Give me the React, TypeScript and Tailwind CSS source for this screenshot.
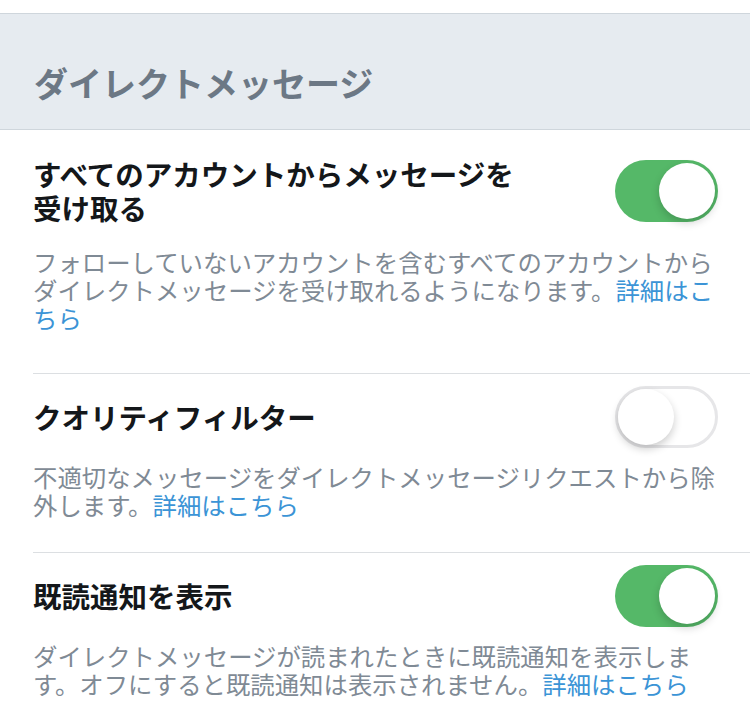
import { useState } from "react";

interface Setting {
    id: string;
    title: string;
    description: string;
    on: boolean;
}

const settings: Setting[] = [
    {
        id: "all",
        title: "すべてのアカウントからメッセージを受け取る",
        description: "フォローしていないアカウントを含むすべてのアカウントからダイレクトメッセージを受け取れるようになります。",
        on: true,
    },
    {
        id: "quality",
        title: "クオリティフィルター",
        description: "不適切なメッセージをダイレクトメッセージリクエストから除外します。",
        on: false,
    },
    {
        id: "receipts",
        title: "既読通知を表示",
        description: "ダイレクトメッセージが読まれたときに既読通知を表示します。オフにすると既読通知は表示されません。",
        on: true,
    },
];

function Toggle({ on, onClick }: { on: boolean; onClick: () => void }) {
    if (!on) {
        return (
            <button
                onClick={onClick}
                className="shrink-0 w-[103px] h-[62px] rounded-full border-[3px] border-[#e6e6e8] bg-white flex items-center"
            >
                <span className="w-[56px] h-[56px] rounded-full bg-white shadow-[0_4px_8px_rgba(0,0,0,0.2)]" />
            </button>
        );
    }
    return (
        <button
            onClick={onClick}
            className="shrink-0 w-[103px] h-[62px] rounded-full p-[3px] flex items-center justify-end bg-[#55b868]"
        >
            <span className="w-[56px] h-[56px] rounded-full bg-white shadow-[0_4px_8px_rgba(0,0,0,0.18)]" />
        </button>
    );
}

export default function App() {
    const [state, setState] = useState(settings.map((s) => s.on));

    const flip = (i: number) => {
        setState((prev) => prev.map((v, j) => (j === i ? !v : v)));
    };

    return (
        <div className="w-[750px] h-[717px] overflow-hidden bg-white font-['Noto_Sans_CJK_JP',sans-serif]">
            {/* top strip */}
            <div className="h-[14px] bg-white border-b border-[#cfd6dc]" />

            {/* section header */}
            <div className="h-[116px] bg-[#e6ebf0] border-b border-[#cfd6dc] flex items-end pl-[34px] pb-[26px]">
                <h2 className="text-[34px] leading-[40px] font-bold text-[#6c7885]">
                    ダイレクトメッセージ
                </h2>
            </div>

            {settings.map((s, i) => (
                <div
                    key={s.id}
                    className={`ml-[33px] pr-[32px] border-b border-[#dcdfe2] ${
                        i === 0 ? "pt-[27px] pb-[41px]" : i === 1 ? "pt-[12px] pb-[33px]" : "pt-[12px] pb-[30px]"
                    }`}
                >
                    <div className="flex items-center">
                        <h3 className="max-w-[500px] text-[28.5px] leading-[34px] font-bold text-[#14171a]">
                            {s.title}
                        </h3>
                        <div className="ml-auto">
                            <Toggle on={state[i]} onClick={() => flip(i)} />
                        </div>
                    </div>
                    <p
                        className={`text-[24.4px] leading-[28px] text-[#7f8a95] ${
                            i === 0 ? "mt-[23px]" : "mt-[15px]"
                        }`}
                    >
                        {s.description}
                        <a href="#" className="text-[#3b94d6]">
                            詳細はこちら
                        </a>
                    </p>
                </div>
            ))}
        </div>
    );
}
